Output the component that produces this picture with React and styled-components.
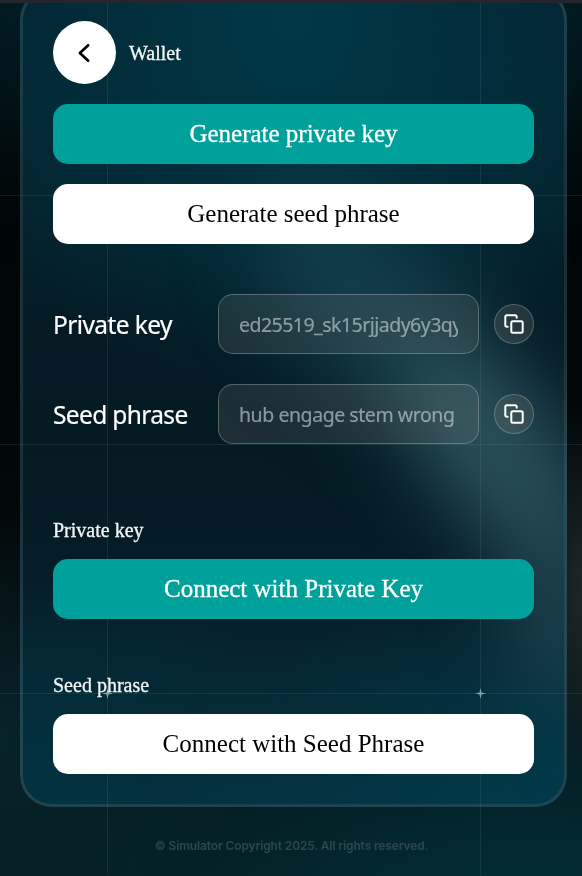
import React from "react";
import styled, { createGlobalStyle, css } from "styled-components";

const Global = createGlobalStyle`
  * { box-sizing: border-box; }
  body { margin: 0; background: #020b0e; overflow: hidden; }
`;

const serif = css`font-family: "Liberation Serif", "Times New Roman", serif;`;

const Page = styled.div`
  position: relative;
  display: flex;
  flex-direction: column;
  width: 582px;
  height: 876px;
  overflow: hidden;
  background:
    radial-gradient(ellipse 120px 190px at 600px 590px, rgba(36, 48, 46, 0.85), transparent),
    radial-gradient(ellipse 600px 260px at 520px 900px, rgba(2, 50, 60, 0.85), transparent),
    radial-gradient(ellipse 260px 230px at 0 740px, rgba(8, 40, 46, 0.8), transparent),
    radial-gradient(ellipse 420px 240px at 290px -20px, rgba(0, 42, 51, 0.9), transparent),
    linear-gradient(#011519 0, #000506 240px, #020809 520px, #06161a 876px);
`;

const TopBar = styled.div`
  position: relative;
  z-index: 2;
  flex: none;
  height: 3px;
  background: #25262d;
`;

const Card = styled.main`
  position: relative;
  display: flex;
  flex-direction: column;
  flex: none;
  width: 547px;
  height: 819px;
  margin: -15px 0 0 20px;
  padding: 30px;
  border: 3px solid rgba(110, 170, 196, 0.26);
  border-radius: 32px;
  background:
    radial-gradient(ellipse 430px 190px at 560px 790px, rgba(0, 62, 80, 0.75), transparent),
    radial-gradient(ellipse 300px 180px at 0 760px, rgba(0, 53, 68, 0.5), transparent),
    radial-gradient(ellipse 350px 400px at 270px 20px, rgba(0, 62, 76, 0.8), transparent),
    linear-gradient(#03222f 0, #032532 120px, #03222e 230px, #041b25 330px, #041a23 450px, #051d28 590px, #052833 720px, #04303d 819px);
  background-clip: padding-box;
`;

const Aurora = styled.svg`
  position: absolute;
  inset: -3px;
  width: 547px;
  height: 819px;
  border-radius: 32px;
  pointer-events: none;
`;

const Grid = styled.svg`
  position: absolute;
  inset: 0;
  width: 582px;
  height: 876px;
  pointer-events: none;
`;

const Content = styled.div`
  position: relative;
  z-index: 1;
  display: flex;
  flex-direction: column;
`;

const Header = styled.header`
  display: flex;
  align-items: center;
  gap: 13px;
  height: 63px;
  margin-bottom: 20px;
`;

const BackButton = styled.button`
  display: grid;
  place-items: center;
  width: 63px;
  height: 63px;
  padding: 0;
  border: 0;
  border-radius: 50%;
  background: #fff;
`;

const Caption = styled.span`
  ${serif}
  font-size: 20px;
  line-height: 22px;
  color: #f3f6f7;
  -webkit-text-stroke: 0.3px currentColor;
`;

const Title = styled(Caption)`
  padding-top: 1px;
`;

const Button = styled.button`
  ${serif}
  display: block;
  width: 100%;
  height: 60px;
  padding: 0 0 1px;
  border: 0;
  border-radius: 15px;
  font-size: 25px;
  color: ${(p) => (p.$primary ? "#fff" : "#000")};
  background: ${(p) => (p.$primary ? "#00a19b" : "#fff")};
  -webkit-text-stroke: ${(p) => (p.$primary ? "0.3px currentColor" : "0")};
`;

const Actions = styled.div`
  display: flex;
  flex-direction: column;
  gap: 20px;
`;

const Fields = styled.div`
  display: flex;
  flex-direction: column;
  gap: 30px;
  margin: 50px 0 75px;
`;

const Field = styled.div`
  display: grid;
  grid-template-columns: 165px 261px 40px;
  justify-content: start;
  align-items: center;
  height: 60px;
`;

const Label = styled.label`
  padding-top: 2px;
  font-family: "Noto Sans", "Open Sans", sans-serif;
  font-size: 24.5px;
  line-height: 34px;
  letter-spacing: ${(p) => p.$spacing};
  color: #fff;
  white-space: nowrap;
  -webkit-text-stroke: 0.2px currentColor;
`;

const ValueInput = styled.input`
  width: 261px;
  height: 60px;
  padding: 1px 20px 0;
  border: 1px solid rgba(255, 255, 255, 0.25);
  border-radius: 15px;
  outline: none;
  background: rgba(120, 120, 120, 0.22);
  font-family: "Noto Sans", "Open Sans", sans-serif;
  font-size: 19.5px;
  letter-spacing: ${(p) => p.$spacing};
  color: rgba(190, 200, 205, 0.68);
  -webkit-text-stroke: 0.15px currentColor;
`;

const CopyButton = styled.button`
  display: grid;
  place-items: center;
  width: 40px;
  height: 40px;
  margin-left: 15px;
  padding: 0;
  border: 1px solid rgba(255, 255, 255, 0.22);
  border-radius: 50%;
  background: rgba(120, 120, 120, 0.24);
`;

const Connect = styled.section`
  display: flex;
  flex-direction: column;
  gap: 18px;
  & + & { margin-top: 55px; }
`;

const Footer = styled.footer`
  position: relative;
  padding: 30px 0 0 1px;
  font-family: Inter, "Liberation Sans", sans-serif;
  font-size: 12px;
  line-height: 18px;
  font-weight: 600;
  letter-spacing: -0.13px;
  text-align: center;
  color: #2d464d;
`;

const CopyIcon = () => (
  <svg width="20" height="20" viewBox="0 0 20 20" fill="none" stroke="#fff" strokeWidth="2" strokeLinecap="round" strokeLinejoin="round">
    <rect x="7.3" y="7.3" width="11.4" height="11.4" rx="1.5" />
    <path d="M3.7 12.7H2.8A1.5 1.5 0 0 1 1.3 11.2V2.8A1.5 1.5 0 0 1 2.8 1.3H11.2A1.5 1.5 0 0 1 12.7 2.8V3.7" />
  </svg>
);

const fields = [
  { label: "Private key", value: "ed25519_sk15rjjady6y3qy7", labelSpacing: "-0.6px", valueSpacing: "-0.52px" },
  { label: "Seed phrase", value: "hub engage stem wrong", labelSpacing: "-0.64px", valueSpacing: "-0.44px" },
];

export default function App() {
  return (
    <Page>
      <Global />
      <TopBar />
      <Card>
        <Aurora viewBox="20 -12 547 819">
          <defs>
            <filter id="soft" x="-100%" y="-100%" width="300%" height="300%" colorInterpolationFilters="sRGB">
              <feGaussianBlur stdDeviation="42" />
            </filter>
          </defs>
          <g filter="url(#soft)">
            <ellipse cx="385" cy="320" rx="165" ry="75" transform="rotate(46 385 320)" fill="#1b4856" opacity=".68" />
            <ellipse cx="500" cy="455" rx="130" ry="64" transform="rotate(52 500 455)" fill="#37616b" opacity=".78" />
            <ellipse cx="565" cy="580" rx="55" ry="120" fill="#264b58" opacity=".8" />
          </g>
        </Aurora>
        <Content>
          <Header>
            <BackButton aria-label="Back">
              <svg width="24" height="24" viewBox="0 0 24 24" fill="none" stroke="#000" strokeWidth="2.7" strokeLinecap="round" strokeLinejoin="round">
                <path d="M15.2 4.3 6.9 12l8.3 7.7" />
              </svg>
            </BackButton>
            <Title>Wallet</Title>
          </Header>
          <Actions>
            <Button $primary>Generate private key</Button>
            <Button>Generate seed phrase</Button>
          </Actions>
          <Fields>
            {fields.map((f) => (
              <Field key={f.label}>
                <Label $spacing={f.labelSpacing}>{f.label}</Label>
                <ValueInput $spacing={f.valueSpacing} value={f.value} readOnly aria-label={f.label} />
                <CopyButton aria-label={`Copy ${f.label}`}><CopyIcon /></CopyButton>
              </Field>
            ))}
          </Fields>
          <Connect>
            <Caption>Private key</Caption>
            <Button $primary>Connect with Private Key</Button>
          </Connect>
          <Connect>
            <Caption>Seed phrase</Caption>
            <Button>Connect with Seed Phrase</Button>
          </Connect>
        </Content>
      </Card>
      <Grid viewBox="0 0 582 876">
        <path d="M107.5 3V104M107.5 164V184M107.5 244V559M107.5 619V714M107.5 774V875M480.5 3V104M480.5 164V184M480.5 244V559M480.5 619V714M480.5 774V875M0 195.5H53M534 195.5H582M0 444.5H582M0 693.5H582" stroke="#7caab5" strokeOpacity=".13" />
        <path d="M107.5 688l1 4.5 4.5 1-4.5 1-1 4.5-1-4.5-4.5-1 4.5-1zM480.5 688l1 4.5 4.5 1-4.5 1-1 4.5-1-4.5-4.5-1 4.5-1z" fill="#a5c3cb" fillOpacity=".75" />
      </Grid>
      <Footer>© Simulator Copyright 2025. All rights reserved.</Footer>
    </Page>
  );
}
